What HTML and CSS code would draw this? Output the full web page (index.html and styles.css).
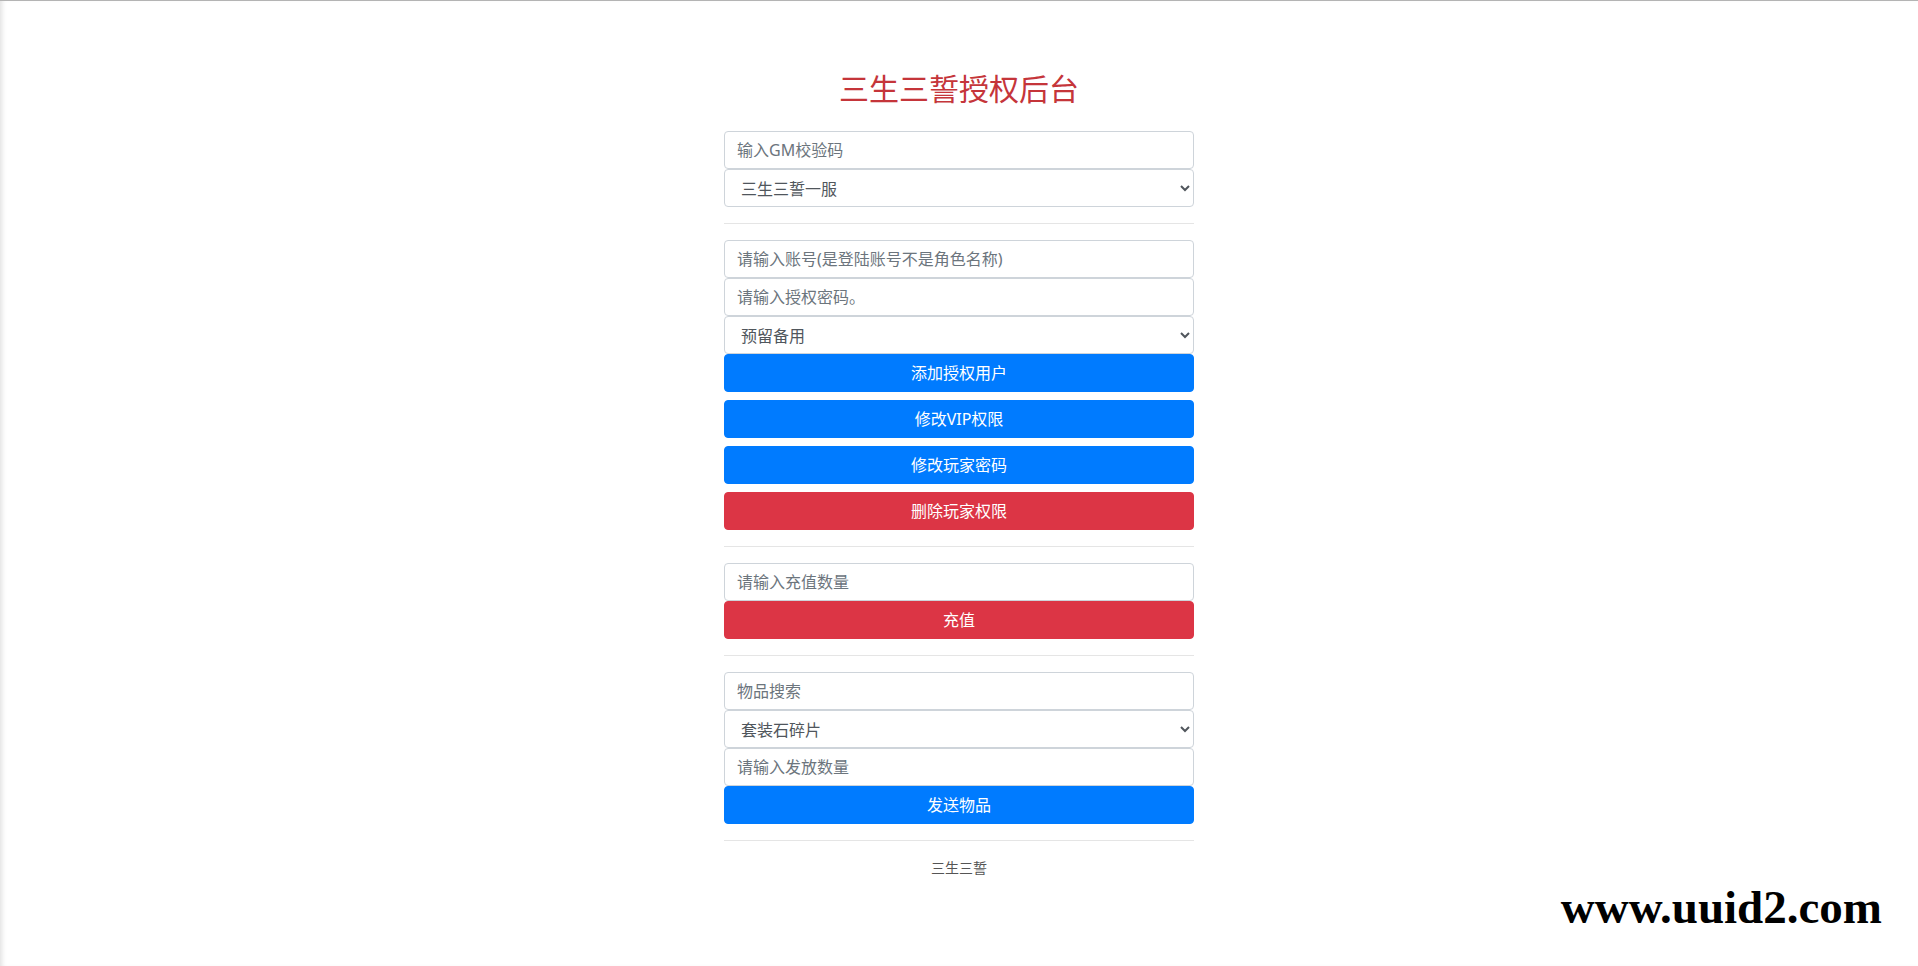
FILE: index.html
```html
<!DOCTYPE html>
<html lang="zh-CN">
<head>
<meta charset="utf-8">
<title>三生三誓授权后台</title>
<link rel="stylesheet" href="styles.css">
</head>
<body>
<div class="page">
  <div class="panel">
    <h1 class="title">三生三誓授权后台</h1>
    <input class="field" type="text" placeholder="输入GM校验码">
    <select class="field">
      <option>三生三誓一服</option>
    </select>
    <hr class="sep">
    <input class="field" type="text" placeholder="请输入账号(是登陆账号不是角色名称)">
    <input class="field" type="text" placeholder="请输入授权密码。">
    <select class="field">
      <option>预留备用</option>
    </select>
    <button class="btn btn-primary">添加授权用户</button>
    <button class="btn btn-primary">修改VIP权限</button>
    <button class="btn btn-primary">修改玩家密码</button>
    <button class="btn btn-danger">删除玩家权限</button>
    <hr class="sep">
    <input class="field" type="text" placeholder="请输入充值数量">
    <button class="btn btn-danger">充值</button>
    <hr class="sep">
    <input class="field" type="text" placeholder="物品搜索">
    <select class="field">
      <option>套装石碎片</option>
    </select>
    <input class="field" type="text" placeholder="请输入发放数量">
    <button class="btn btn-primary">发送物品</button>
    <hr class="sep">
    <p class="footer">三生三誓</p>
  </div>
  <div class="watermark">www.uuid2.com</div>
</div>
</body>
</html>
```
FILE: styles.css
```css
html, body {
  margin: 0;
  padding: 0;
  background: #fff;
}
body {
  font-family: "Noto Sans", "Noto Sans CJK SC", sans-serif;
  font-size: 16px;
  line-height: 1.5;
  color: #212529;
}
.page {
  position: relative;
  min-height: 966px;
  box-sizing: border-box;
  border-top: 1px solid #b4b4b4;
  box-shadow: inset 5px 0 5px -3px rgba(0, 0, 0, 0.12);
}
.panel {
  width: 470px;
  margin: 0 auto;
  padding-top: 68px;
  display: flex;
  flex-direction: column;
}
.title {
  margin: 0 0 26px;
  font-family: "Noto Sans CJK SC", sans-serif;
  font-size: 30px;
  line-height: 36px;
  font-weight: 400;
  color: #c5353a;
  text-align: center;
}
.field {
  display: block;
  box-sizing: border-box;
  width: 100%;
  height: 38px;
  margin: 0;
  padding: 6px 12px;
  font-family: "Noto Sans", "Noto Sans CJK SC", sans-serif;
  font-size: 16px;
  line-height: 1.5;
  color: #495057;
  background: #fff;
  border: 1px solid #ced4da;
  border-radius: 4px;
  outline: none;
}
select.field {
  padding-top: 7px;
  padding-bottom: 5px;
  font-weight: 400;
  color: #50565c;
}
.field::placeholder {
  color: #6c757d;
  opacity: 1;
}
.sep {
  width: 100%;
  margin: 16px 0;
  border: 0;
  border-top: 1px solid rgba(0, 0, 0, 0.1);
  height: 0;
}
.btn {
  display: block;
  box-sizing: border-box;
  width: 100%;
  height: 38px;
  margin: 0;
  padding: 6px 12px;
  font-family: "Noto Sans", "Noto Sans CJK SC", sans-serif;
  font-size: 16px;
  line-height: 1.5;
  color: #fff;
  border: 1px solid transparent;
  border-radius: 4px;
  text-align: center;
  cursor: pointer;
}
.btn + .btn {
  margin-top: 8px;
}
.btn-primary {
  background: #007bff;
  border-color: #007bff;
}
.btn-danger {
  background: #dc3545;
  border-color: #dc3545;
}
.footer {
  margin: 0;
  font-family: "Noto Sans CJK SC", sans-serif;
  font-size: 14px;
  line-height: 21px;
  color: #555;
  text-align: center;
}
.watermark {
  position: absolute;
  right: 36px;
  top: 883px;
  font-family: "Liberation Serif", serif;
  font-weight: 700;
  font-size: 47px;
  line-height: 47px;
  color: #000;
}
```
